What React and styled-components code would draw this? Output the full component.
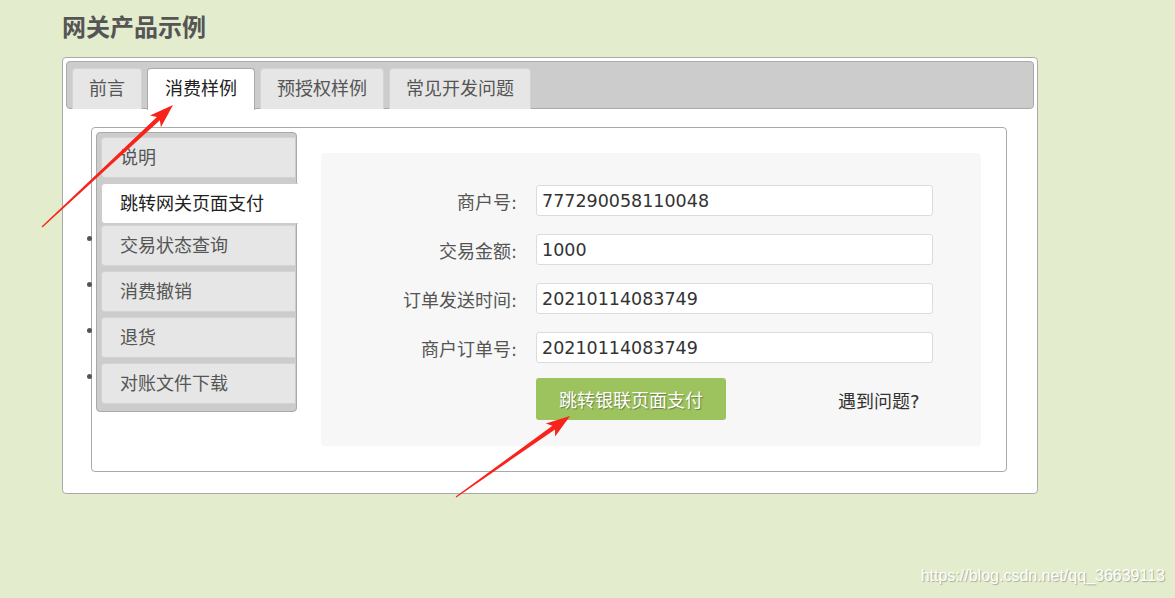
import React from 'react';
import styled, { createGlobalStyle, css } from 'styled-components';

const GlobalStyle = createGlobalStyle`
  html, body {
    margin: 0;
    padding: 0;
    background: #e3edcd;
  }
  body {
    font-family: "DejaVu Sans", "Noto Sans CJK SC", sans-serif;
    color: #555;
  }
  * { box-sizing: border-box; }
`;

const topTabs = ['前言', '消费样例', '预授权样例', '常见开发问题'];
const sideTabs = ['说明', '跳转网关页面支付', '交易状态查询', '消费撤销', '退货', '对账文件下载'];
const fields = [
    { label: '商户号:', value: '777290058110048' },
    { label: '交易金额:', value: '1000' },
    { label: '订单发送时间:', value: '20210114083749' },
    { label: '商户订单号:', value: '20210114083749' }
];

// tapered screenshot-tool arrow, points worked out from tail and tip
function arrowPoints([sx, sy], [tx, ty]) {
    const len = Math.hypot(tx - sx, ty - sy);
    const dx = (tx - sx) / len;
    const dy = (ty - sy) / len;
    const nx = -dy;
    const ny = dx;
    const head = 24;
    const bx = tx - dx * head;
    const by = ty - dy * head;
    const pts = [
        [sx + nx * 0.6, sy + ny * 0.6],
        [bx + dx * 4 + nx * 2.2, by + dy * 4 + ny * 2.2],
        [bx + nx * 8, by + ny * 8],
        [tx, ty],
        [bx - nx * 8, by - ny * 8],
        [bx + dx * 4 - nx * 2.2, by + dy * 4 - ny * 2.2],
        [sx - nx * 0.6, sy - ny * 0.6]
    ];
    return pts.map(p => p.map(v => v.toFixed(1)).join(',')).join(' ');
}

export default function App() {
    return (
        <>
            <GlobalStyle />
            <Page>
                <Title>网关产品示例</Title>
                <OuterTabs>
                    <TabBar>
                        {topTabs.map((t, i) => (
                            <TopTab key={t} $active={i === 1}>{t}</TopTab>
                        ))}
                    </TabBar>
                    <TabPanel>
                        <InnerBox>
                            <SideNav>
                                {sideTabs.map((t, i) => (
                                    <SideItem key={t} $active={i === 1} $bullet={i > 1}>{t}</SideItem>
                                ))}
                            </SideNav>
                            <ContentArea>
                                <FormPanel>
                                    {fields.map(f => (
                                        <React.Fragment key={f.label}>
                                            <Label>{f.label}</Label>
                                            <Input defaultValue={f.value} />
                                        </React.Fragment>
                                    ))}
                                    <ButtonRow>
                                        <PayButton>跳转银联页面支付</PayButton>
                                        <HelpLink>遇到问题?</HelpLink>
                                    </ButtonRow>
                                </FormPanel>
                            </ContentArea>
                        </InnerBox>
                    </TabPanel>
                </OuterTabs>
            </Page>
            <Annotations width="1175" height="598" viewBox="0 0 1175 598">
                <polygon points={arrowPoints([42, 227], [173, 105])} fill="#f8231b" />
                <polygon points={arrowPoints([456, 497], [570, 416])} fill="#f8231b" />
            </Annotations>
            <Watermark>https://blog.csdn.net/qq_36639113</Watermark>
        </>
    );
}

const Page = styled.div`
  padding: 12px 0 0 62px;
`;

const Title = styled.h1`
  margin: 0 0 17px;
  font-family: "Noto Sans CJK SC", sans-serif;
  font-size: 24px;
  line-height: 28px;
  font-weight: bold;
  color: #555;
`;

const OuterTabs = styled.div`
  width: 976px;
  padding: 3px;
  background: #fff;
  border: 1px solid #aaa;
  border-radius: 4px;
`;

const TabBar = styled.ul`
  display: flex;
  align-items: flex-end;
  gap: 5px;
  height: 48px;
  margin: 0;
  padding: 6px 4px 0 5px;
  list-style: none;
  background: #ccc;
  border: 1px solid #aaa;
  border-radius: 4px;
`;

const TopTab = styled.li`
  height: 41px;
  margin-bottom: -1px;
  padding: 0 16px;
  font-size: 18px;
  line-height: 40px;
  color: #555;
  background: #e6e6e6;
  border: 1px solid #d3d3d3;
  border-bottom: none;
  border-radius: 4px 4px 0 0;
  ${p => p.$active && css`
    height: 42px;
    margin-bottom: -2px;
    padding: 0 17px;
    color: #212121;
    background: #fff;
    border-color: #aaa;
  `}
`;

const TabPanel = styled.div`
  padding: 18px 27px 18px 25px;
`;

const InnerBox = styled.div`
  display: flex;
  align-items: flex-start;
  padding: 4px;
  border: 1px solid #aaa;
  border-radius: 4px;
`;

const SideNav = styled.ul`
  flex: 0 0 201px;
  margin: 0;
  padding: 4px 1px 7px 4px;
  list-style: none;
  background: #ccc;
  border: 1px solid #aaa;
  border-radius: 4px;
`;

const SideItem = styled.li`
  position: relative;
  height: 41px;
  margin-bottom: 5px;
  padding-left: 18px;
  font-size: 18px;
  line-height: 40px;
  color: #555;
  background: #e6e6e6;
  border: 1px solid #d3d3d3;
  border-right: none;
  border-radius: 4px 0 0 4px;
  &:last-child { margin-bottom: 0; }
  ${p => p.$active && css`
    margin-right: -3px;
    margin-bottom: 1px;
    color: #212121;
    background: #fff;
    border-color: #ccc;
  `}
  ${p => p.$bullet && css`
    &::before {
      content: '';
      position: absolute;
      left: -15px;
      top: 10px;
      width: 5px;
      height: 5px;
      border-radius: 50%;
      background: #555;
    }
  `}
`;

const ContentArea = styled.div`
  flex: 1;
  padding: 21px 21px 21px 24px;
`;

const FormPanel = styled.div`
  display: grid;
  grid-template-columns: 196px 397px;
  column-gap: 19px;
  row-gap: 18px;
  padding: 32px 0 26px;
  background: #f7f7f7;
  border-radius: 4px;
`;

const Label = styled.label`
  align-self: center;
  text-align: right;
  font-size: 18px;
  color: #555;
`;

const Input = styled.input`
  height: 31px;
  padding: 0 5px;
  font-family: "DejaVu Sans", sans-serif;
  font-size: 17.5px;
  color: #333;
  background: #fff;
  border: 1px solid #dcdcdc;
  border-radius: 3px;
  outline: none;
`;

const ButtonRow = styled.div`
  grid-column: 2;
  display: flex;
  align-items: center;
  gap: 112px;
  margin-top: -3px;
`;

const PayButton = styled.button`
  width: 190px;
  height: 42px;
  padding: 0;
  font-family: "Noto Sans CJK SC", sans-serif;
  font-size: 18px;
  color: #fff;
  text-shadow: 1px 1px 1px rgba(0, 0, 0, 0.35);
  background: #9dc35e;
  border: none;
  border-radius: 3px;
`;

const HelpLink = styled.span`
  margin-top: 2px;
  font-size: 18px;
  color: #333;
`;

const Annotations = styled.svg`
  position: absolute;
  left: 0;
  top: 0;
  pointer-events: none;
`;

const Watermark = styled.div`
  position: absolute;
  right: 10px;
  top: 567px;
  font-family: "Liberation Sans", Arial, sans-serif;
  font-size: 16px;
  color: #fff;
  text-shadow: 1px 1px 1px rgba(0, 0, 0, 0.28);
`;
